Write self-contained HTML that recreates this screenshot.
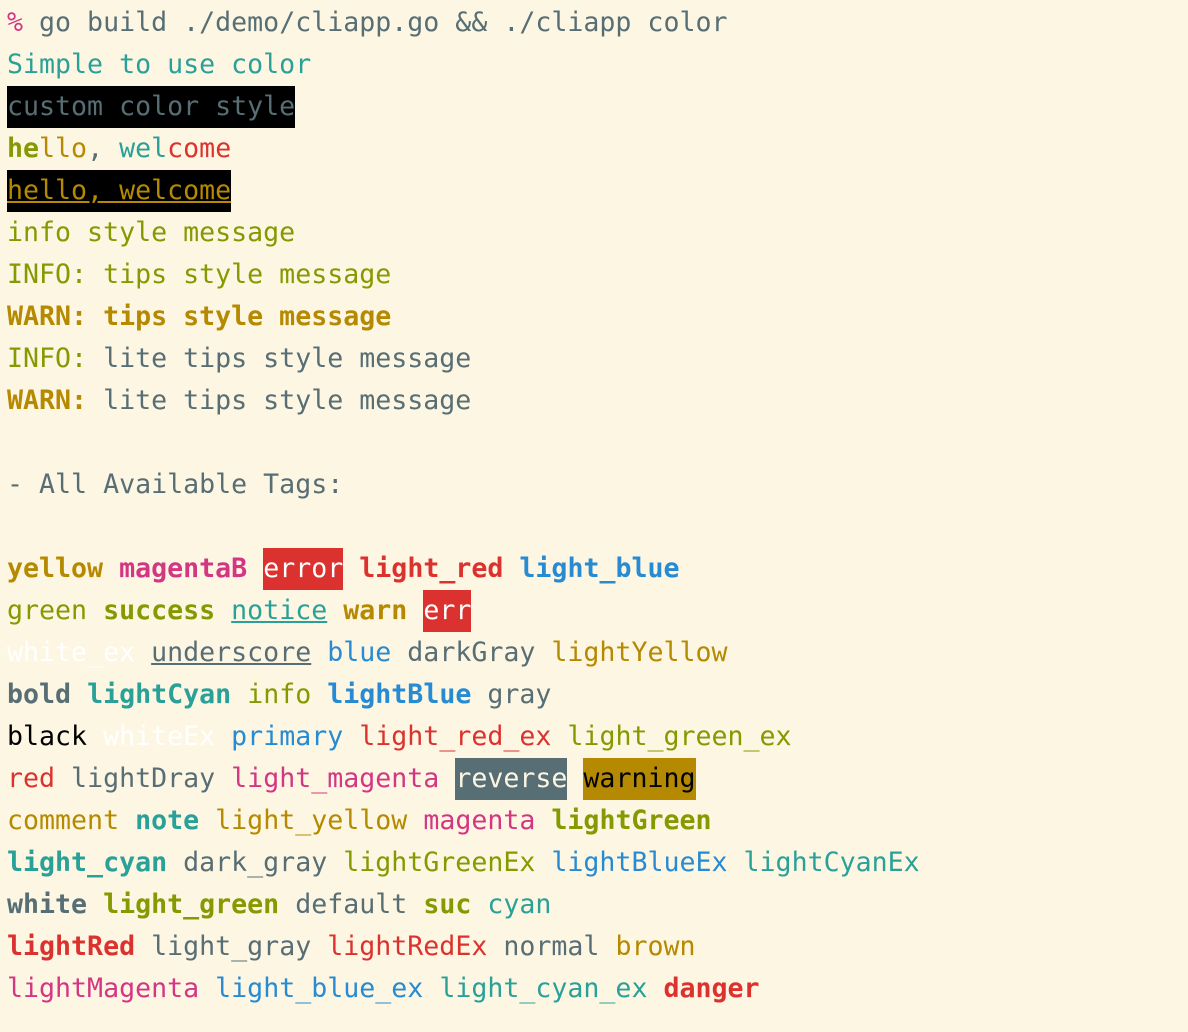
<!DOCTYPE html>
<html><head><meta charset="utf-8"><style>
html,body{margin:0;padding:0;background:#fdf6e3;}
body{width:1188px;height:1032px;overflow:hidden;font-family:"DejaVu Sans Mono","Liberation Mono",monospace;font-size:26.6px;color:#586e75;}
.w{padding:2px 0 0 7px;}
.l{height:42px;line-height:42px;white-space:pre;}
.b{font-weight:bold}
.g{color:#859900}.y{color:#b58900}.r{color:#dc322f}.m{color:#d33682}.bl{color:#268bd2}.c{color:#2aa198}.k{color:#000}.wh{color:#ffffff}
.u{text-decoration:underline}
.bg{display:inline-block;height:42px;line-height:42px;vertical-align:top}
</style></head><body><div class="w">
<div class="l"><span class="m">%</span> go build ./demo/cliapp.go &amp;&amp; ./cliapp color</div>
<div class="l c">Simple to use color</div>
<div class="l"><span class="bg" style="background:#000;color:#586e75">custom color style</span></div>
<div class="l"><span class="g b">he</span><span class="y">llo</span>, <span class="c">wel</span><span class="r">come</span></div>
<div class="l"><span class="bg y u" style="background:#000">hello, welcome</span></div>
<div class="l g">info style message</div>
<div class="l g">INFO: tips style message</div>
<div class="l y b">WARN: tips style message</div>
<div class="l"><span class="g">INFO:</span> lite tips style message</div>
<div class="l"><span class="y b">WARN:</span> lite tips style message</div>
<div class="l"> </div>
<div class="l">- All Available Tags:</div>
<div class="l"> </div>
<div class="l"><span class="y b">yellow</span> <span class="m b">magentaB</span> <span class="bg" style="background:#dc322f;color:#fff">error</span> <span class="r b">light_red</span> <span class="bl b">light_blue</span></div>
<div class="l"><span class="g">green</span> <span class="g b">success</span> <span class="c u">notice</span> <span class="y b">warn</span> <span class="bg" style="background:#dc322f;color:#fff">err</span></div>
<div class="l"><span class="wh">white_ex</span> <span class="u">underscore</span> <span class="bl">blue</span> darkGray <span class="y">lightYellow</span></div>
<div class="l"><span class="b">bold</span> <span class="c b">lightCyan</span> <span class="g">info</span> <span class="bl b">lightBlue</span> gray</div>
<div class="l"><span class="k">black</span> <span class="wh">whiteEx</span> <span class="bl">primary</span> <span class="r">light_red_ex</span> <span class="g">light_green_ex</span></div>
<div class="l"><span class="r">red</span> lightDray <span class="m">light_magenta</span> <span class="bg" style="background:#586e75;color:#fdf6e3">reverse</span> <span class="bg" style="background:#b58900;color:#000">warning</span></div>
<div class="l"><span class="y">comment</span> <span class="c b">note</span> <span class="y">light_yellow</span> <span class="m">magenta</span> <span class="g b">lightGreen</span></div>
<div class="l"><span class="c b">light_cyan</span> dark_gray <span class="g">lightGreenEx</span> <span class="bl">lightBlueEx</span> <span class="c">lightCyanEx</span></div>
<div class="l"><span class="b">white</span> <span class="g b">light_green</span> default <span class="g b">suc</span> <span class="c">cyan</span></div>
<div class="l"><span class="r b">lightRed</span> light_gray <span class="r">lightRedEx</span> normal <span class="y">brown</span></div>
<div class="l"><span class="m">lightMagenta</span> <span class="bl">light_blue_ex</span> <span class="c">light_cyan_ex</span> <span class="r b">danger</span></div>
</div></body></html>
